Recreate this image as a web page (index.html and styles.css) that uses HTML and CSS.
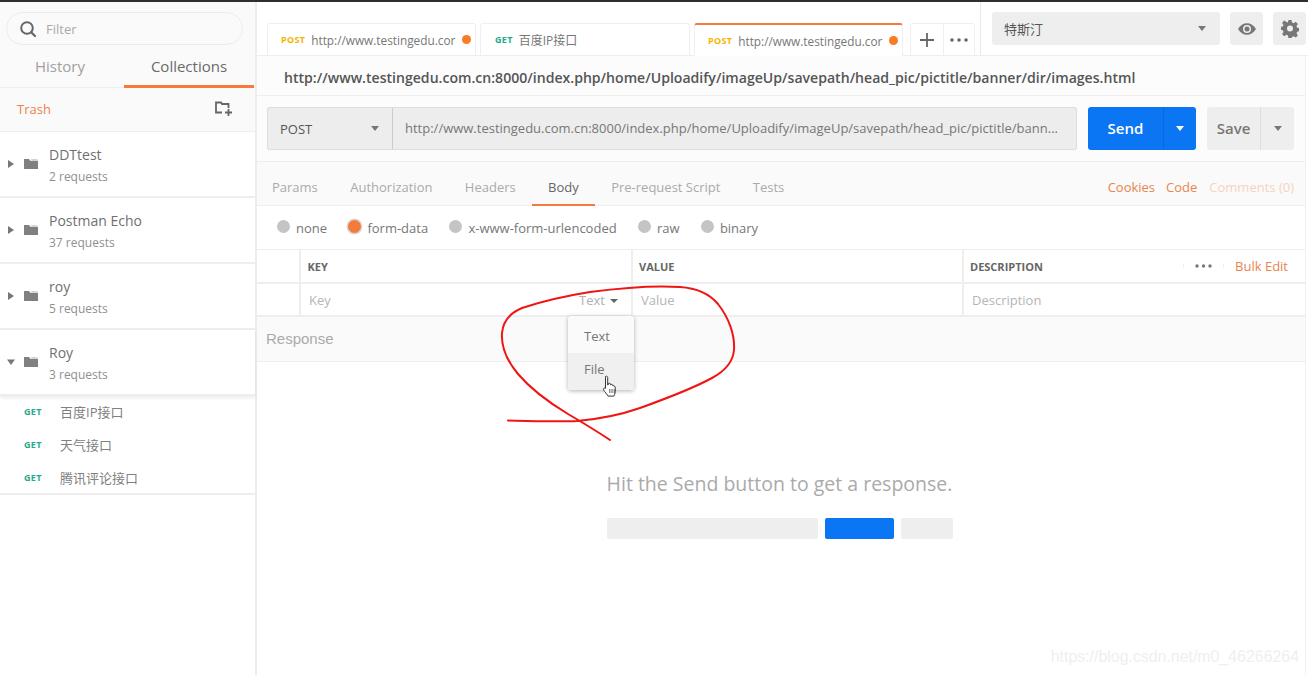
FILE: index.html
```html
<!DOCTYPE html>
<html lang="en">
<head>
<meta charset="utf-8">
<title>Postman</title>
<link rel="stylesheet" href="styles.css">
</head>
<body>
<div class="app">
  <aside class="sidebar">
    <div class="filter-wrap">
      <div class="filter">
        <svg class="search-icon" width="18" height="18" viewBox="0 0 18 18"><circle cx="8" cy="8" r="5.8" fill="none" stroke="#666" stroke-width="2"/><path d="M12.2 12.2 16 16" stroke="#666" stroke-width="2.2" stroke-linecap="round"/></svg>
        <span>Filter</span>
      </div>
    </div>
    <div class="side-tabs">
      <div class="side-tab">History</div>
      <div class="side-tab active">Collections</div>
    </div>
    <div class="trash-row">
      <span class="trash">Trash</span>
      <svg width="20" height="18" viewBox="0 0 20 18"><path d="M8 12.5H2V2.5h5l1 1.5h6.500V8" fill="none" stroke="#666" stroke-width="1.800"/><path d="M14.500 9v7M11 12.500h7" stroke="#666" stroke-width="1.800"/></svg>
    </div>
    <div class="coll">
      <svg class="caret" width="8" height="10" viewBox="0 0 8 10"><path d="M1 1l6 4-6 4z" fill="#777"/></svg>
      <svg class="folder" width="14" height="10" viewBox="0 0 14 10"><path d="M0 0h5l1.500 2H14v8H0z" fill="#808080"/><path d="M7 .5h6.500v1H7.400z" fill="#aaa"/></svg>
      <div class="coll-text"><div class="coll-name">DDTtest</div><div class="coll-count">2 requests</div></div>
    </div>
    <div class="coll">
      <svg class="caret" width="8" height="10" viewBox="0 0 8 10"><path d="M1 1l6 4-6 4z" fill="#777"/></svg>
      <svg class="folder" width="14" height="10" viewBox="0 0 14 10"><path d="M0 0h5l1.500 2H14v8H0z" fill="#808080"/><path d="M7 .5h6.500v1H7.400z" fill="#aaa"/></svg>
      <div class="coll-text"><div class="coll-name">Postman Echo</div><div class="coll-count">37 requests</div></div>
    </div>
    <div class="coll">
      <svg class="caret" width="8" height="10" viewBox="0 0 8 10"><path d="M1 1l6 4-6 4z" fill="#777"/></svg>
      <svg class="folder" width="14" height="10" viewBox="0 0 14 10"><path d="M0 0h5l1.500 2H14v8H0z" fill="#808080"/><path d="M7 .5h6.500v1H7.400z" fill="#aaa"/></svg>
      <div class="coll-text"><div class="coll-name">roy</div><div class="coll-count">5 requests</div></div>
    </div>
    <div class="coll open">
      <svg class="caret" width="8" height="10" viewBox="0 0 8 10"><path d="M0 2.500h8l-4 5.500z" fill="#777"/></svg>
      <svg class="folder" width="14" height="10" viewBox="0 0 14 10"><path d="M0 0h5l1.500 2H14v8H0z" fill="#808080"/><path d="M7 .5h6.500v1H7.400z" fill="#aaa"/></svg>
      <div class="coll-text"><div class="coll-name">Roy</div><div class="coll-count">3 requests</div></div>
    </div>
    <div class="reqs">
      <div class="req"><span class="get">GET</span><span>百度IP接口</span></div>
      <div class="req"><span class="get">GET</span><span>天气接口</span></div>
      <div class="req"><span class="get">GET</span><span>腾讯评论接口</span></div>
    </div>
  </aside>

  <main class="main">
    <header class="topbar">
      <div class="tabs">
        <div class="tab"><span class="post">POST</span><span class="tab-title">http://www.testingedu.cor</span><i class="dot"></i></div>
        <div class="tab tab-get"><span class="get">GET</span><span class="tab-title">百度IP接口</span></div>
        <div class="tab active"><span class="post">POST</span><span class="tab-title">http://www.testingedu.cor</span><i class="dot"></i></div>
        <div class="tab-actions">
          <div class="tab-btn"><svg width="14" height="14" viewBox="0 0 14 14"><path d="M7 0v14M0 7h14" stroke="#666" stroke-width="1.800"/></svg></div>
          <div class="tab-btn"><svg width="18" height="4" viewBox="0 0 18 4"><circle cx="2" cy="2" r="1.800" fill="#666"/><circle cx="9" cy="2" r="1.800" fill="#666"/><circle cx="16" cy="2" r="1.800" fill="#666"/></svg></div>
        </div>
      </div>
      <div class="env">
        <div class="env-select"><span>特斯汀</span><b class="arrow"></b></div>
        <div class="icon-btn"><svg width="18" height="12" viewBox="0 0 18 12"><path d="M0 6c2.300-3.800 5.300-5.800 9-5.800S15.700 2.200 18 6c-2.300 3.800-5.300 5.800-9 5.800S2.300 9.800 0 6z" fill="#777"/><circle cx="9" cy="6" r="4" fill="#eee"/><circle cx="9" cy="6" r="2.500" fill="#777"/></svg></div>
        <div class="icon-btn"><svg width="18" height="18" viewBox="0 0 18 18"><path d="M7.500 0h3l.5 2.500 1.600.7 2.200-1.400 2.100 2.100-1.400 2.200.7 1.600 2.500.5v3l-2.500.5-.7 1.600 1.400 2.200-2.100 2.100-2.200-1.400-1.600.7-.5 2.500h-3L7 15.500l-1.600-.7-2.200 1.400-2.100-2.100 1.400-2.200-.7-1.600L-.7 10V7l2.500-.5.7-1.600-1.400-2.200 2.100-2.100 2.200 1.400L7 2.500z" fill="#777"/><circle cx="9" cy="8.500" r="3" fill="#eee"/></svg></div>
      </div>
    </header>

    <div class="content">
      <div class="title-row">http://www.testingedu.com.cn:8000/index.php/home/Uploadify/imageUp/savepath/head_pic/pictitle/banner/dir/images.html</div>

      <div class="url-row">
        <div class="method"><span>POST</span><b class="arrow"></b></div>
        <div class="url">http://www.testingedu.com.cn:8000/index.php/home/Uploadify/imageUp/savepath/head_pic/pictitle/bann...</div>
        <div class="send"><span class="send-label">Send</span><span class="send-drop"><b class="arrow white"></b></span></div>
        <div class="save"><span class="save-label">Save</span><span class="save-drop"><b class="arrow"></b></span></div>
      </div>

      <nav class="req-tabs">
        <span class="req-tab">Params</span>
        <span class="req-tab">Authorization</span>
        <span class="req-tab">Headers</span>
        <span class="req-tab active">Body</span>
        <span class="req-tab">Pre-request Script</span>
        <span class="req-tab">Tests</span>
        <span class="links"><a>Cookies</a><a>Code</a><a class="faded">Comments (0)</a></span>
      </nav>

      <div class="radios">
        <label class="radio"><i></i>none</label>
        <label class="radio on"><i></i>form-data</label>
        <label class="radio"><i></i>x-www-form-urlencoded</label>
        <label class="radio"><i></i>raw</label>
        <label class="radio"><i></i>binary</label>
      </div>

      <div class="table">
        <div class="t-row head">
          <div class="c0"></div>
          <div class="c1">KEY</div>
          <div class="c2">VALUE</div>
          <div class="c3"><span>DESCRIPTION</span><span class="head-tools"><svg width="17" height="4" viewBox="0 0 17 4"><circle cx="2" cy="2" r="1.700" fill="#777"/><circle cx="8.500" cy="2" r="1.700" fill="#777"/><circle cx="15" cy="2" r="1.700" fill="#777"/></svg><a>Bulk Edit</a></span></div>
        </div>
        <div class="t-row body">
          <div class="c0"></div>
          <div class="c1"><span>Key</span><span class="type">Text<b class="arrow small"></b></span></div>
          <div class="c2">Value</div>
          <div class="c3">Description</div>
        </div>
      </div>

      <div class="response-head">Response</div>

      <div class="empty">
        <p class="empty-text">Hit the Send button to get a response.</p>
        <div class="ghost"><i class="g1"></i><i class="g2"></i><i class="g3"></i></div>
      </div>
    </div>
  </main>
</div>

<div class="menu">
  <div class="menu-item">Text</div>
  <div class="menu-item hover">File</div>
</div>

<svg class="cursor" width="18" height="24" viewBox="0 0 17 24"><path d="M3 1.500c1-.8 2.200-.2 2.200 1V10l.6-.3V8.800c.8-.8 2-.6 2.300.2v.8c.8-.6 1.900-.5 2.300.4v.7c.9-.4 1.900 0 2.100.9.400 1.500.5 4 .1 6-.3 1.500-.8 2.500-1.300 3.300H5.600c-.6-1.100-1.600-2.300-2.900-4C1.800 16.300 1 15 1 14c.1-.9 1.100-1.400 2-.7V3c0-.6 0-1.200 0-1.500z" fill="#fff" stroke="#333" stroke-width="1" stroke-linejoin="round"/><path d="M7.300 14v4M9.500 14v4M11.700 14v4" stroke="#333" stroke-width=".8"/></svg>

<svg class="ink" width="1308" height="675" viewBox="0 0 1308 675"><path d="M508 420.500C535 421 560 422 577 421C600 419 620 415 640 408C665 399 690 390 712 378C725 371 733 362 734 350C735 335 729 318 718 304C708 292 695 288 680 287C650 285 620 288 590 292C565 296 540 302 522 308C510 313 503 322 502 333C501 348 508 362 518 374C530 388 548 402 568 414C585 424 598 432 610 440" fill="none" stroke="#f01414" stroke-width="2" stroke-linecap="round" stroke-linejoin="round"/></svg>

<div class="watermark">https://blog.csdn.net/m0_46266264</div>
</body>
</html>
```

FILE: styles.css
```css
* { box-sizing: border-box; }
html, body { margin: 0; height: 100%; }
body {
  position: relative;
  width: 1308px;
  height: 675px;
  overflow: hidden;
  background: #fff;
  border-top: 2px solid #2e2e2e;
  color: #666;
  font-family: "Open Sans", "Noto Sans CJK SC", sans-serif;
  font-size: 13px;
}
.app { display: flex; height: 673px; }

/* sidebar */
.sidebar {
  flex: 0 0 257px;
  border-right: 2px solid #ededed;
  background: #fff;
}
.filter-wrap { background: #fafafa; padding: 10px 12px 0 6px; height: 43px; }
.filter {
  display: flex; align-items: center; gap: 9px;
  height: 33px; padding-left: 12px;
  border: 1px solid #ececec; border-radius: 17px;
  color: #aaa; font-size: 13px;
}
.search-icon { flex: none; }
.side-tabs { display: flex; height: 43px; background: #fafafa; border-bottom: 1px solid #eee; padding-right: 1px; }
.side-tab { flex: 0 0 124px; padding-right: 4px; text-align: center; font-size: 15px; line-height: 42px; color: #a0a0a0; }
.side-tab.active { flex: 0 0 130px; padding-right: 0; color: #6a6a6a; border-bottom: 3px solid #f47b3a; height: 43px; margin-bottom: -1px; }
.trash-row {
  display: flex; align-items: center; justify-content: space-between;
  height: 44px; padding: 0 21px 2px 17px;
  background: #fafafa; border-bottom: 1px solid #eee;
}
.trash { color: #f0814a; font-size: 13px; }
.coll {
  display: flex; align-items: center;
  height: 66px; padding-left: 7px;
  border-bottom: 2px solid #eee;
}
.coll.open { box-shadow: 0 2px 4px rgba(0,0,0,.08); position: relative; }
.caret { flex: none; margin-right: 9px; }
.folder { flex: none; margin-right: 11px; }
.coll-text { margin-top: 2px; }
.coll-name { font-size: 14px; line-height: 20px; color: #707070; }
.coll-count { font-size: 12px; line-height: 18px; margin-top: 3px; color: #909090; }
.reqs { border-bottom: 2px solid #eee; margin-top: -1px; height: 100px; }
.req { display: flex; align-items: center; height: 33px; padding-left: 24px; font-size: 13px; color: #808080; }
.req .get { width: 36px; }
.get { color: #26a88a; font-size: 9px; font-weight: 700; letter-spacing: .3px; }
.post { color: #f5b400; font-size: 9px; font-weight: 700; letter-spacing: .3px; }

/* top bar */
.main { flex: 1; min-width: 0; display: flex; flex-direction: column; }
.topbar { display: flex; height: 54px; }
.tabs {
  display: flex; align-items: flex-end;
  flex: 0 0 723px;
  padding-left: 10px;
  border-bottom: 1px solid #eee;
}
.tab {
  display: flex; align-items: center; gap: 6px;
  width: 209px; height: 32px; margin-right: 4px;
  padding: 0 6px 0 13px;
  border: 1px solid #efefef; border-bottom: 0; border-radius: 3px 3px 0 0;
  font-size: 12px; color: #777;
  white-space: nowrap;
}
.tab.tab-get { width: 210px; padding-left: 14px; }
.tab.active { border-top: 2px solid #f47b3a; height: 33px; margin-bottom: -1px; background: #fff; margin-right: 7px; }
.tab-title { flex: 0 0 145px; font-size: 11.800px; }
.tab-get .tab-title { flex: 1; font-size: 12px; }
.dot { flex: none; width: 9px; height: 9px; border-radius: 50%; background: #f97c22; }
.tab-actions { display: flex; height: 32px; border: 1px solid #efefef; border-bottom: 0; border-radius: 3px 3px 0 0; }
.tab-btn { display: flex; align-items: center; justify-content: center; width: 32px; }
.tab-btn + .tab-btn { border-left: 1px solid #efefef; width: 31px; padding-right: 1px; }
.env {
  flex: 1; display: flex; gap: 10px;
  padding: 10px 2px 0 11px;
  border-left: 1px solid #e8e8e8;
  border-bottom: 1px solid #eee;
}
.env-select {
  display: flex; align-items: center; justify-content: space-between;
  width: 228px; height: 33px; padding: 0 14px 0 12px;
  background: #eee; border-radius: 3px;
  font-size: 13px; color: #555;
}
.icon-btn { display: flex; align-items: center; justify-content: center; width: 33px; height: 33px; background: #eee; border-radius: 3px; }
.arrow { display: inline-block; width: 0; height: 0; border-left: 4.500px solid transparent; border-right: 4.500px solid transparent; border-top: 5px solid #777; }
.arrow.white { border-top-color: #fff; }
.arrow.small { border-left-width: 4px; border-right-width: 4px; border-top-width: 4.500px; border-top-color: #666; margin-left: 5px; vertical-align: 2px; }

/* request */
.content { flex: 1; display: flex; flex-direction: column; margin-right: 2px; border-right: 1px solid #f0f0f0; }
.title-row {
  height: 40px; padding-left: 27px;
  font-size: 14.080px; font-weight: 600; line-height: 44px; color: #555;
  background: #fcfcfc; border-bottom: 1px solid #eee;
  white-space: nowrap; overflow: hidden;
}
.url-row {
  display: flex; height: 66px; padding: 11px 10px 0 10px;
  background: #fcfcfc; border-bottom: 1px solid #eee;
}
.method {
  display: flex; align-items: center; justify-content: space-between;
  width: 126px; height: 43px; padding: 0 13px 0 12px;
  background: #ededed; border: 1px solid #ddd; border-right: 1px solid #ccc; border-radius: 3px 0 0 3px;
  color: #555; font-size: 13px;
}
.url {
  width: 684px; height: 43px; padding: 0 10px 0 12px;
  background: #ededed; border: 1px solid #ddd; border-left: 0; border-radius: 0 3px 3px 0;
  font-size: 13px; line-height: 41px; color: #777;
  white-space: nowrap;
}
.send {
  display: flex; width: 108px; height: 43px; margin-left: 11px;
  background: #0a76f3; border-radius: 3px; color: #fff;
  font-size: 15px; font-weight: 600; line-height: 43px;
}
.send-label { width: 75px; text-align: center; }
.send-drop { flex: 1; display: flex; align-items: center; justify-content: center; border-left: 1px solid #0b68d6; }
.save {
  display: flex; width: 87px; height: 43px; margin-left: 11px;
  background: #eee; border-radius: 3px; color: #777;
  font-size: 15px; font-weight: 600; line-height: 43px;
}
.save-label { width: 53px; text-align: center; }
.save-drop { flex: 1; display: flex; align-items: center; justify-content: center; border-left: 1px solid #ddd; }

.req-tabs {
  display: flex; height: 44px; padding-left: 15px;
  background: #fafafa; border-bottom: 1px solid #eee;
  font-size: 13px; line-height: 50px; color: #aaa;
}
.req-tab { margin-right: 32.400px; height: 44px; }
.req-tab.active {
  color: #666;
  padding: 0 16px; margin: 0 16.400px 0 -16px;
  border-bottom: 2px solid #f47b3a;
}
.links { margin-left: auto; padding-right: 11px; display: flex; gap: 11px; color: #e9854f; }
.links .faded { color: #f7d3bd; margin-left: 1px; }

.radios { display: flex; align-items: center; height: 43px; padding-left: 20px; font-size: 13px; color: #777; }
.radio { display: flex; align-items: center; margin-right: 21.300px; }
.radio i { width: 13px; height: 13px; border-radius: 50%; background: #c4c4c4; margin-right: 6px; margin-top: -3px; }
.radio.on i { background: #f47b3a; box-shadow: 0 0 0 1.500px #d8d8d8; }

.table { border-top: 1px solid #eee; }
.t-row { display: flex; }
.t-row > div { border-right: 2px solid #eee; display: flex; align-items: center; }
.head { height: 34px; border-bottom: 2px solid #eee; font-size: 11px; font-weight: 700; color: #666; }
.body { height: 33px; border-bottom: 2px solid #eee; font-size: 13px; color: #b5b5b5; }
.c0 { flex: 0 0 44px; }
.c1 { flex: 0 0 332px; padding-left: 6.500px; justify-content: space-between; padding-right: 13px; }
.body .c1 { padding-left: 8px; }
.c2 { flex: 0 0 331px; padding-left: 6px; }
.body .c2 { padding-left: 8px; }
.c3 { flex: 1; padding-left: 6px; justify-content: space-between; }
.t-row > .c3 { border-right: 0; }
.body .c3 { padding-left: 8px; }
.head-tools {
  display: flex; align-items: center; height: 28px; padding-right: 17px;
  font-weight: 400; font-size: 13px;
}
.head-tools svg { box-sizing: content-box; padding: 0 11px; border-left: 1px solid #eee; border-right: 1px solid #eee; margin-right: 11px; }
.head-tools a { color: #e9854f; }
.type { color: #b0b0b0; }

.response-head {
  height: 45px; padding-left: 9px;
  background: #fafafa; border-bottom: 1px solid #eee;
  font-family: "Liberation Sans", sans-serif; font-size: 15px; line-height: 44px; color: #aaa;
}
.empty { display: flex; flex-direction: column; align-items: center; padding-top: 107px; padding-right: 3px; }
.empty-text { margin: 0; font-size: 19.500px; line-height: 30px; color: #aaa; }
.ghost { display: flex; gap: 7px; margin-top: 19px; height: 21px; }
.ghost i { display: block; border-radius: 2px; background: #eee; }
.g1 { width: 211px; }
.ghost .g2 { width: 69px; background: #0a76f3; }
.g3 { width: 52px; }

/* overlays */
.menu {
  position: absolute; left: 568px; top: 314px;
  width: 66px; height: 74px;
  padding-top: 4px;
  background: #fafafa; border-radius: 3px;
  box-shadow: 0 1px 4px rgba(0,0,0,.3);
  font-size: 13px; color: #777;
}
.menu-item { height: 33px; padding-left: 16px; line-height: 33px; }
.menu-item.hover { height: 37px; background: #f0f0f0; border-radius: 0 0 3px 3px; }
.cursor { position: absolute; left: 602px; top: 373px; }
.ink { position: absolute; left: 0; top: -2px; pointer-events: none; }
.watermark {
  position: absolute; right: 9px; top: 646px;
  font-family: "Liberation Sans", sans-serif; font-size: 15.900px; color: #efefef;
}
```
